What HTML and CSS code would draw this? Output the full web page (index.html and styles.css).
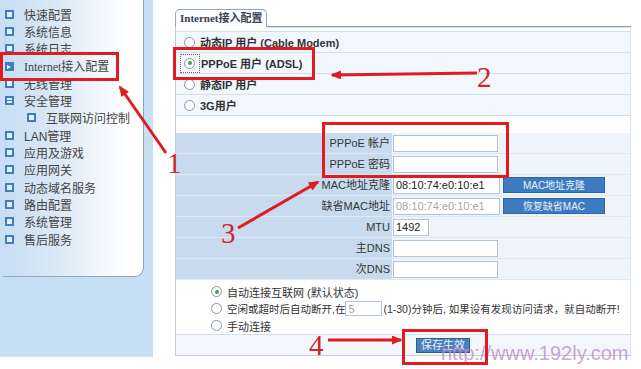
FILE: index.html
```html
<!DOCTYPE html>
<html lang="zh-CN">
<head>
<meta charset="utf-8">
<title>Internet接入配置</title>
<link rel="stylesheet" href="styles.css">
</head>
<body>
<div class="page">
  <aside class="sidebar">
    <ul class="menu">
      <li class="item"><span class="ico"></span>快速配置</li>
      <li class="item"><span class="ico"></span>系统信息</li>
      <li class="item"><span class="ico"></span>系统日志</li>
      <li class="item serif"><span class="ico ico-go"></span>Internet接入配置</li>
      <li class="item"><span class="ico"></span>无线管理</li>
      <li class="item"><span class="ico ico-minus"></span>安全管理</li>
      <li class="item sub"><span class="ico"></span>互联网访问控制</li>
      <li class="item"><span class="ico"></span>LAN管理</li>
      <li class="item"><span class="ico"></span>应用及游戏</li>
      <li class="item"><span class="ico"></span>应用网关</li>
      <li class="item"><span class="ico"></span>动态域名服务</li>
      <li class="item"><span class="ico"></span>路由配置</li>
      <li class="item"><span class="ico"></span>系统管理</li>
      <li class="item"><span class="ico"></span>售后服务</li>
    </ul>
  </aside>
  <main class="main">
    <div class="tabbar">
      <div class="tab">Internet接入配置</div>
      <div class="tabline"></div>
    </div>
    <div class="box">
      <div class="modes">
        <div class="mode"><span class="radio"></span>动态IP 用户 (Cable Modem)</div>
        <div class="mode"><span class="focus"><span class="radio on"></span></span>PPPoE 用户 (ADSL)</div>
        <div class="mode"><span class="radio"></span>静态IP 用户</div>
        <div class="mode"><span class="radio"></span>3G用户</div>
      </div>
      <div class="form">
        <div class="frow"><div class="lbl">PPPoE 帐户</div><div class="val"><input class="inp w104" type="text" value=""></div></div>
        <div class="frow"><div class="lbl">PPPoE 密码</div><div class="val"><input class="inp w104" type="password" value=""></div></div>
        <div class="frow"><div class="lbl">MAC地址克隆</div><div class="val"><input class="inp w106" type="text" value="08:10:74:e0:10:e1"><span class="btn">MAC地址克隆</span></div></div>
        <div class="frow"><div class="lbl">缺省MAC地址</div><div class="val"><input class="inp w106 dim" type="text" value="08:10:74:e0:10:e1"><span class="btn">恢复缺省MAC</span></div></div>
        <div class="frow"><div class="lbl">MTU</div><div class="val"><input class="inp w35" type="text" value="1492"></div></div>
        <div class="frow"><div class="lbl">主DNS</div><div class="val"><input class="inp w104" type="text" value=""></div></div>
        <div class="frow"><div class="lbl">次DNS</div><div class="val"><input class="inp w104" type="text" value=""></div></div>
      </div>
      <div class="opts">
        <div class="opt"><span class="radio on"></span>自动连接互联网 (默认状态)</div>
        <div class="opt narrow"><span class="radio"></span>空闲或超时后自动断开,在<input class="inp idle dim" type="text" value="5">(1-30)分钟后, 如果设有发现访问请求，就自动断开!</div>
        <div class="opt"><span class="radio"></span>手动连接</div>
      </div>
      <div class="actions"><span class="btn save">保存生效</span></div>
    </div>
  </main>
</div>
<div class="watermark">http://www.192ly.com</div>
<svg class="annot" width="641" height="369" viewBox="0 0 641 369">
  <defs>
    <marker id="ah" viewBox="0 0 12 10" refX="10" refY="5" markerWidth="4.2" markerHeight="3" orient="auto" markerUnits="strokeWidth">
      <path d="M0,0 L12,5 L0,10 z" fill="#e01b22"/>
    </marker>
  </defs>
  <g fill="none" stroke="#e01b22" stroke-width="3">
    <rect x="1.5" y="53.5" width="116" height="26"/>
    <rect x="174.5" y="48.5" width="139" height="30"/>
    <rect x="323.5" y="123.5" width="184" height="53"/>
    <rect x="403.5" y="330.5" width="83" height="33"/>
    <line x1="166" y1="153" x2="120" y2="87" marker-end="url(#ah)"/>
    <line x1="477" y1="73" x2="332" y2="75" marker-end="url(#ah)"/>
    <line x1="238" y1="228" x2="318" y2="182" marker-end="url(#ah)"/>
    <line x1="328" y1="340" x2="401" y2="340" marker-end="url(#ah)"/>
  </g>
  <g class="num" fill="#d0232b">
    <text x="167" y="173">1</text>
    <text x="477" y="87">2</text>
    <text x="221" y="243">3</text>
    <text x="309" y="355">4</text>
  </g>
</svg>
</body>
</html>
```

FILE: styles.css
```css
* { box-sizing: border-box; }
html, body { margin: 0; padding: 0; }
body {
  width: 641px;
  height: 369px;
  overflow: hidden;
  position: relative;
  background: #ffffff;
  font-family: "Liberation Sans", "Noto Sans CJK SC", sans-serif;
  font-size: 11px;
  color: #333;
}
.page { display: flex; align-items: flex-start; height: 369px; }

/* sidebar */
.sidebar {
  width: 153px;
  height: 357px;
  background: #c6dff3;
  padding-left: 3px;
}
.menu {
  list-style: none;
  margin: 0;
  width: 141px;
  height: 277px;
  padding: 5.5px 0 0 0;
  border-right: 1px solid #8ea3b7;
  border-bottom: 1px solid #8ea3b7;
  border-bottom-right-radius: 9px;
  background: linear-gradient(to right, #c8def2 0%, #dbe9f7 40%, #f3f8fd 70%, #ffffff 90%);
}
.item {
  height: 17.3px;
  display: flex;
  align-items: center;
  padding-left: 2px;
  font-size: 12px;
  color: #444;
  white-space: nowrap;
}
.item.serif { font-family: "Liberation Serif", "Noto Sans CJK SC", serif; font-size: 12px; }
.item.sub { padding-left: 24px; }
.ico {
  width: 9px;
  height: 9px;
  border: 2px solid #3f7cc6;
  background: #e6effa;
  margin-right: 10px;
  flex: none;
  position: relative;
}
.ico-go { background: #3f7cc6; }
.ico-go::after {
  content: "";
  position: absolute;
  left: 0px; top: 1px;
  width: 0; height: 0;
  border-left: 4px solid #fff;
  border-top: 2.5px solid transparent;
  border-bottom: 2.5px solid transparent;
}
.ico-minus::after {
  content: "";
  position: absolute;
  left: 0; top: 1.5px;
  width: 5px; height: 1.5px;
  background: #3f7cc6;
}

/* main */
.main {
  margin-left: 22px;
  width: 456px;
  padding-top: 9px;
}
.tabbar { display: flex; align-items: flex-end; height: 18px; }
.tab {
  height: 18px;
  padding: 0 3px 0 4px;
  border: 1px solid #95a7b9;
  border-bottom: none;
  border-radius: 5px 5px 0 0;
  background: #fbfcfe;
  font-family: "Liberation Serif", "Noto Sans CJK SC", serif;
  font-weight: bold;
  font-size: 11px;
  line-height: 17px;
  color: #3a4250;
  white-space: nowrap;
}
.tabline {
  flex: 1;
  border-bottom: 1px solid #8d9eaf;
  box-shadow: 0 1px 0 #d8e2ec;
}
.box {
  border-left: 1px solid #c3cfdb;
  border-right: 1px solid #dbe3eb;
  border-bottom: 1px solid #c3cfdb;
  padding-top: 4px;
}
.modes { border-bottom: 1px solid #d3dfea; margin-bottom: 17px; }
.mode {
  height: 21px;
  border-top: 1px solid #d3dfea;
  background: #f2f7fb;
  display: flex;
  align-items: center;
  padding-left: 8px;
  font-weight: bold;
  color: #2f3338;
  white-space: nowrap;
}
.radio {
  width: 11px;
  height: 11px;
  border-radius: 50%;
  border: 1px solid #8796a8;
  background: #fff;
  margin-right: 5px;
  flex: none;
  position: relative;
}
.radio.on::after {
  content: "";
  position: absolute;
  left: 2.5px; top: 2.5px;
  width: 4px; height: 4px;
  border-radius: 50%;
  background: #39a43b;
}
.focus {
  display: flex;
  align-items: center;
  height: 19px;
  margin-left: -4px;
  padding: 0 0 0 3px;
  width: 20px;
  border: 1px dotted #6a6a6a;
  margin-right: 1px;
}
.focus .radio { margin-right: 0; }

/* form */
.form { display: flex; flex-direction: column; }
.frow { display: flex; height: 21px; }
.lbl {
  width: 216px;
  background: #c8dbee;
  border-bottom: 1px solid #dde8f3;
  text-align: right;
  padding-right: 2px;
  line-height: 20px;
  color: #333;
  white-space: nowrap;
}
.val {
  flex: 1;
  display: flex;
  align-items: center;
  gap: 3px;
  padding-left: 1px;
  background: #eef4fa;
  border-bottom: 1px solid #dde8f3;
}
.inp {
  height: 17px;
  border: 1px solid #b1c3d6;
  background: #fff;
  padding: 0 2px;
  margin: 0;
  font-family: "Liberation Sans", sans-serif;
  font-size: 11px;
  color: #222;
  outline: none;
}
.inp.dim { color: #a5a5a5; }
.w104 { width: 105px; }
.w106 { width: 107px; }
.w35 { width: 36px; }
.btn {
  display: inline-block;
  width: 102px;
  height: 16px;
  line-height: 15px;
  text-align: center;
  background: #3d7bc0;
  border: 1px solid #2f65a3;
  color: #eaf2fb;
  font-size: 10px;
  white-space: nowrap;
}

/* options */
.opts { height: 54px; padding-top: 3px; padding-left: 35px; }
.opt {
  height: 17px;
  display: flex;
  align-items: center;
  white-space: nowrap;
  color: #333;
}
.opt.narrow { font-size: 10.5px; }
.opt .radio { margin-right: 5px; }
.inp.idle { width: 37px; height: 15px; margin: 0 1px 0 0; }
.actions {
  height: 21px;
  border-top: 1px solid #d3dfea;
  background: #f3f7fb;
  padding-left: 240px;
  display: flex;
  align-items: center;
}
.btn.save {
  width: 54px;
  height: 15px;
  font-size: 11px;
  line-height: 13px;
  background: #4b80bf;
  border-color: #2d5b90;
}

/* overlays */
.watermark {
  position: absolute;
  left: 441px;
  top: 341px;
  font-family: "Liberation Sans", sans-serif;
  font-size: 20px;
  line-height: 24px;
  color: rgba(190, 140, 200, 0.8);
  white-space: nowrap;
}
.annot { position: absolute; left: 0; top: 0; }
.num text {
  font-family: "Liberation Serif", serif;
  font-size: 29px;
}
```
